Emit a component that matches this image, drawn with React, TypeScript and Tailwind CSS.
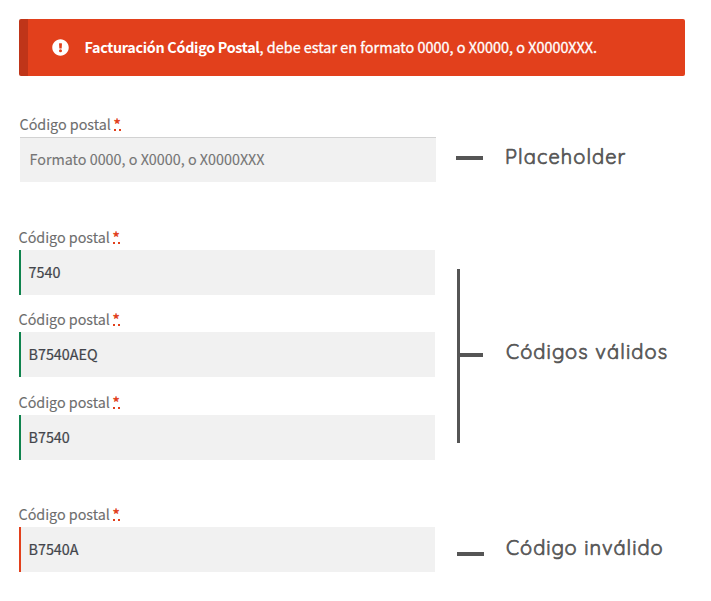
import React from "react";

type Status = "idle" | "valid" | "invalid";

function Field({ value, status }: { value: string; status: Status }) {
  const border =
    status === "valid"
      ? "border-l-2 border-[#0f834d] pl-[7.5px] pb-0.5 text-[#43454b] [-webkit-text-stroke:0.2px_#43454b]"
      : status === "invalid"
        ? "border-l-2 border-[#e2401c] pl-[7.5px] pb-0.5 text-[#43454b] [-webkit-text-stroke:0.2px_#43454b]"
        : "border-t border-[#d2d2d2] pl-[9.5px] pb-0.5 text-[#757575] [-webkit-text-stroke:0.1px_#757575]";
  return (
    <div className="w-[416px] text-[14.35px]">
      <div className="-ml-[0.5px] flex h-[23px] items-start leading-[20px] text-[#6d6d6d] [-webkit-text-stroke:0.1px]">
        <span className="whitespace-pre tracking-[-0.02px]">Código postal </span>
        <span className="-ml-[0.5px] h-[17px] border-b-2 border-dotted border-[#e2401c] font-bold text-[#e2401c]">*</span>
      </div>
      <div className={`flex h-[45px] items-center bg-[#f1f1f1] ${border}`}>
        <span>{value}</span>
      </div>
    </div>
  );
}

function Note({ children, className }: { children: string; className: string }) {
  return (
    <span className={`whitespace-nowrap font-['Quicksand','Comfortaa','Lato',sans-serif] text-xl leading-6 text-[#555] [-webkit-text-stroke:0.7px_#555] ${className}`}>
      {children}
    </span>
  );
}

export default function App() {
  return (
    <div className="h-[601px] w-[711px] bg-white pt-[19px] font-['Noto_Sans_CJK_SC',sans-serif]">
      <div className="ml-[19px] flex h-[57px] w-[666px] items-center rounded-xs border-l-[9px] border-[#bf3519] bg-[#e2401c] pl-6 text-[14.35px] text-white">
        <svg viewBox="0 0 512 512" className="mr-[15.5px] size-[17px]" fill="currentColor">
          <path fillRule="evenodd" d="M504 256c0 137-111 248-248 248S8 393 8 256 119 8 256 8s248 111 248 248zM256 306a46 46 0 1 0 0 92 46 46 0 0 0 0-92zM212 141l8 136c0 7 6 11 12 11h48c6 0 12-4 12-11l8-136c0-7-5-13-12-13h-64c-7 0-12 6-12 13z" />
        </svg>
        <p className="whitespace-nowrap pb-0.5">
          <strong className="font-bold tracking-[-0.3px]">Facturación Código Postal</strong>
          <span className="tracking-[0.03px] [-webkit-text-stroke:0.3px_white]">, debe estar en formato 0000, o X0000, o X0000XXX.</span>
        </p>
      </div>

      <div className="ml-5 mt-[38px] flex">
        <Field value="Formato 0000, o X0000, o X0000XXX" status="idle" />
        <div className="ml-5 mt-[42px] h-1 w-[27px] bg-[#555]" />
        <Note className="ml-[22px] mt-[31px] tracking-[1.1px]">Placeholder</Note>
      </div>

      <div className="ml-[19px] mt-[45px] flex">
        <div className="flex flex-col">
          <Field value="7540" status="valid" />
          <div className="h-3.5" />
          <Field value="B7540AEQ" status="valid" />
          <div className="h-[15px]" />
          <Field value="B7540" status="valid" />
        </div>
        <div className="ml-[22px] mt-[42px] h-[174px] w-[3px] bg-[#555]" />
        <div className="mt-[126px] h-1 w-[23px] bg-[#555]" />
        <Note className="ml-[23px] mt-[113px] tracking-[1.1px]">Códigos válidos</Note>
      </div>

      <div className="ml-[19px] mt-11 flex">
        <Field value="B7540A" status="invalid" />
        <div className="ml-[22px] mt-12 h-1 w-[27px] bg-[#555]" />
        <Note className="ml-[22px] mt-[32px] tracking-[1px]">Código inválido</Note>
      </div>
    </div>
  );
}
